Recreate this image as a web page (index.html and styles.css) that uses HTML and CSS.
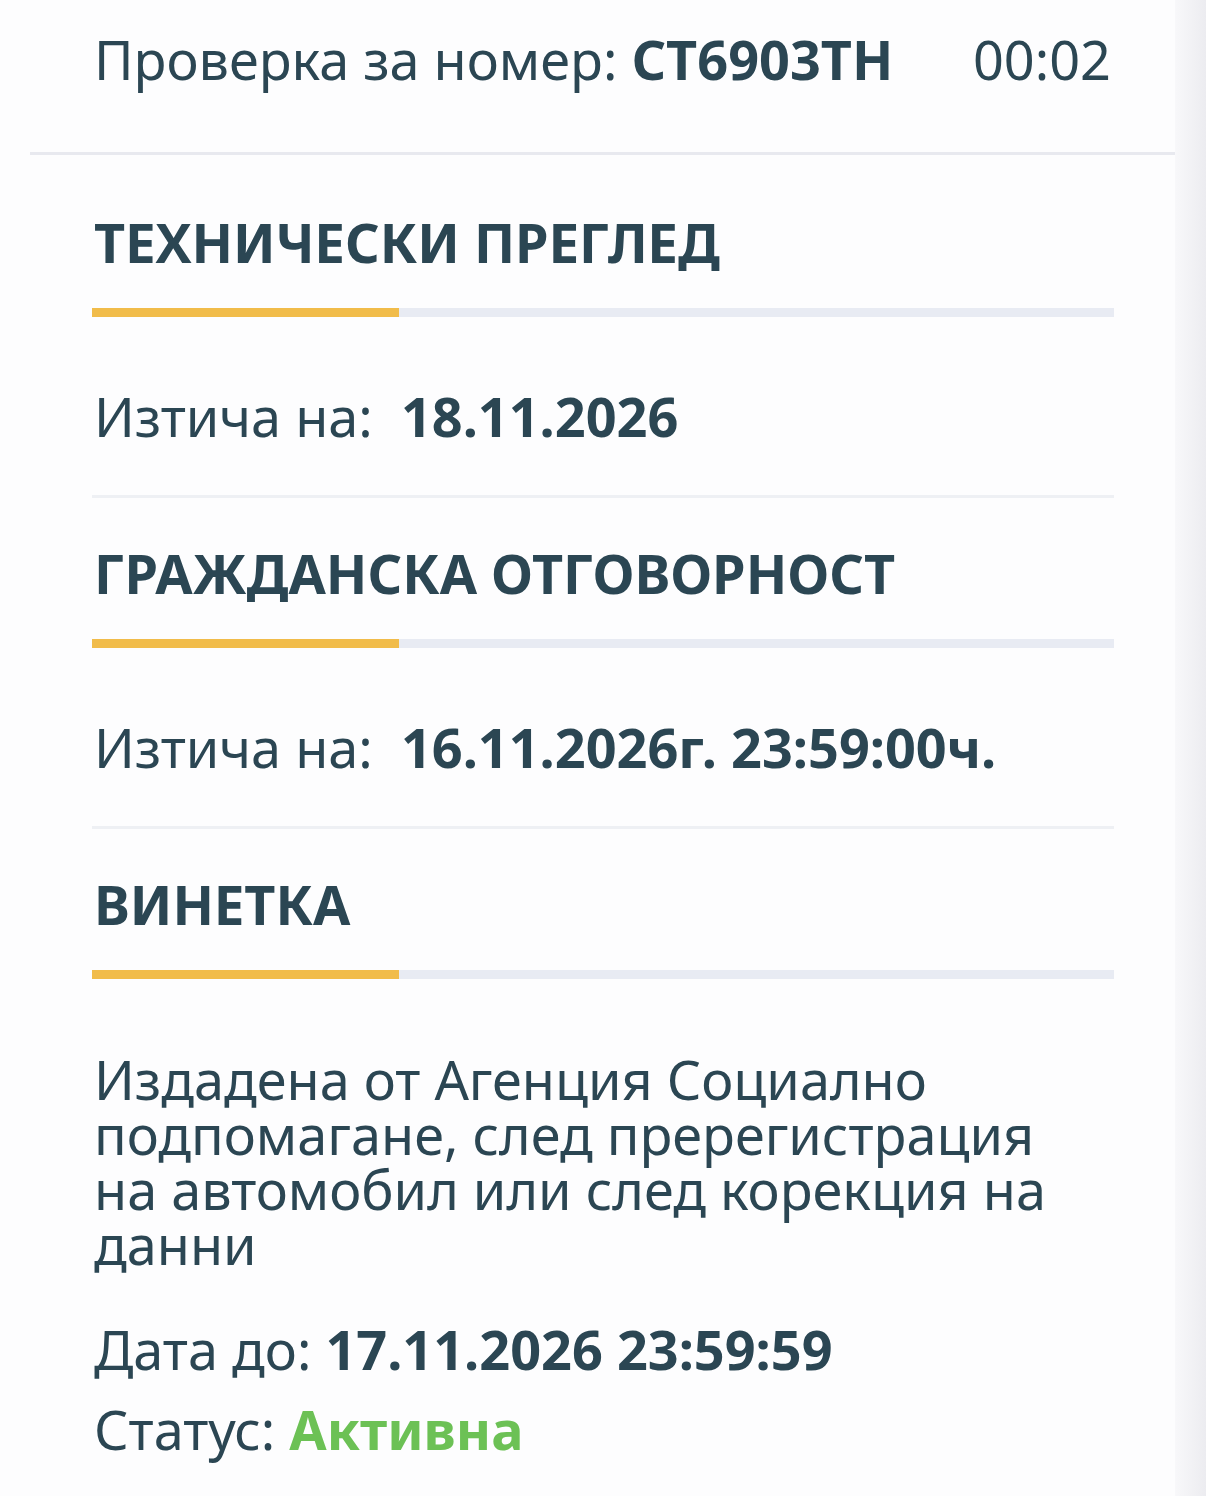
FILE: index.html
```html
<!DOCTYPE html>
<html lang="bg">
<head>
<meta charset="UTF-8">
<meta name="viewport" content="width=device-width, initial-scale=1.0">
<title>Проверка за номер</title>
<link rel="stylesheet" href="styles.css">
</head>
<body>

  <div class="screen">
    <header class="top">
      <p class="plate">Проверка за номер: <b>CT6903TH</b></p>
      <span class="timer">00:02</span>
    </header>

    <main class="content">
      <section class="block">
        <h2>ТЕХНИЧЕСКИ ПРЕГЛЕД</h2>
        <div class="bar"><span style="width: 30%"></span></div>
        <p class="row">Изтича на:&nbsp; <b>18.11.2026</b></p>
      </section>

      <section class="block">
        <h2>ГРАЖДАНСКА ОТГОВОРНОСТ</h2>
        <div class="bar"><span style="width: 30%"></span></div>
        <p class="row">Изтича на:&nbsp; <b>16.11.2026г. 23:59:00ч.</b></p>
      </section>

      <section class="block last">
        <h2>ВИНЕТКА</h2>
        <div class="bar"><span style="width: 30%"></span></div>
        <p class="note">Издадена от Агенция Социално подпомагане, след пререгистрация на автомобил или след корекция на данни</p>
        <p class="row">Дата до: <b>17.11.2026 23:59:59</b></p>
        <p class="row">Статус: <b class="active">Активна</b></p>
      </section>
    </main>
  </div>

</body>
</html>
```

FILE: styles.css
```css
body {
  margin: 0;
  font-family: "Noto Sans", "Open Sans", sans-serif;
  color: #2b4653;
  background: linear-gradient(to right, #fdfdfe 1175px, #f8f8fa 1175px, #ececf0 1206px);
  min-height: 1496px;
}

.screen {
  width: 1175px;
  background-color: #fdfdfe;
  min-height: 1496px;
}

.top {
  display: flex;
  justify-content: space-between;
  align-items: center;
  margin: 0 0 0 30px;
  padding: 27px 64px 60px;
  border-bottom: 3px solid #e8e9ef;
  font-size: 54px;
  line-height: 65px;
}

.plate {
  margin: 0;
}

.plate b {
  font-weight: 700;
}

.timer {
  font-weight: 400;
}

.content {
  margin: 0 61px 0 92px;
  padding-top: 12px;
}

.block {
  padding: 41px 0 46px;
  border-bottom: 3px solid #eef0f4;
}

.block.last {
  border-bottom: none;
}

h2 {
  margin: 0 0 32px 2px;
  font-size: 54px;
  line-height: 68px;
  font-weight: 700;
}

.bar {
  height: 9px;
  background-color: #e8ebf3;
  margin-bottom: 67px;
}

.bar span {
  display: block;
  height: 100%;
  background-color: #f1bc4a;
}

.row {
  margin: 0 0 0 2px;
  font-size: 54px;
  line-height: 65px;
}

.row + .row {
  margin-top: 15px;
}

.row b {
  font-weight: 700;
}

.note {
  max-width: 1000px;
  margin: 73px 0 45px 2px;
  font-size: 54px;
  line-height: 55px;
}

.block.last .bar {
  margin-bottom: 0;
}

.active {
  color: #6cc155;
}
```
